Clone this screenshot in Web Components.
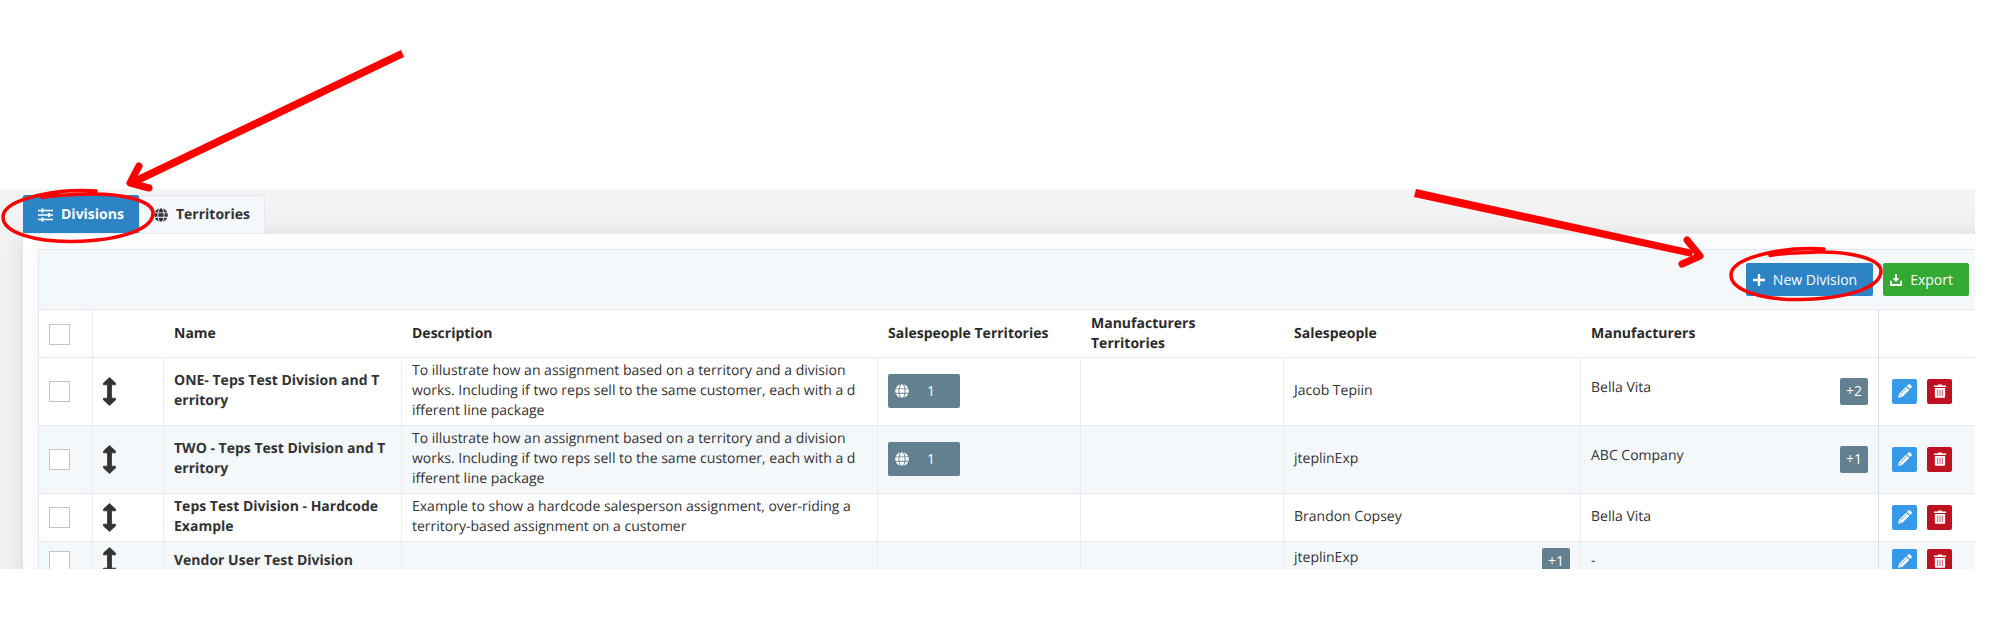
<!DOCTYPE html>
<html lang="en">
<head>
<meta charset="utf-8">
<title>Divisions</title>
<style>
    body {
        margin: 0;
        background: #fff;
        color: #333;
        font: 14px/20px "Open Sans", "Noto Sans", sans-serif;
        text-rendering: geometricPrecision;
    }
</style>
</head>
<body>
<division-page></division-page>

<script>
const icons = {
    sliders: ['0 0 15 14', '<path d="M0 2.500h15M0 7h15M0 11.500h15" stroke="currentColor" stroke-width="1.700"/><path d="M4.500 0.500v4M11 5v4M4.500 9.500v4" stroke="currentColor" stroke-width="2.200"/>'],
    globe: ['0 0 496 512', '<path fill="currentColor" d="M336.500 160C322 70.700 287.800 8 248 8s-74 62.700-88.500 152h177zM152 256c0 22.200 1.200 43.500 3.300 64h185.300c2.100-20.500 3.300-41.800 3.300-64s-1.200-43.500-3.300-64H155.300c-2.100 20.500-3.300 41.800-3.300 64zm324.700-96c-28.600-67.900-86.500-120.400-158-141.600 24.400 33.800 41.200 84.700 50 141.600h108zM177.200 18.400C105.800 39.600 47.800 92.100 19.300 160h108c8.700-56.900 25.500-107.800 49.900-141.600zM487.400 192H372.700c2.100 21 3.300 42.500 3.300 64s-1.200 43-3.300 64h114.600c5.500-20.500 8.600-41.800 8.600-64s-3.100-43.500-8.500-64zM120 256c0-21.500 1.200-43 3.300-64H8.600C3.200 212.500 0 233.800 0 256s3.200 43.500 8.600 64h114.600c-2-21-3.200-42.500-3.200-64zm39.500 96c14.500 89.300 48.700 152 88.500 152s74-62.700 88.500-152h-177zm159.300 141.600c71.400-21.200 129.400-73.700 158-141.600h-108c-8.800 56.900-25.600 107.800-50 141.600zM19.300 352c28.600 67.900 86.500 120.400 158 141.600-24.400-33.800-41.200-84.700-50-141.600h-108z"/>'],
    plus: ['0 0 12 12', '<path d="M6 0.500v11M0.500 6h11" stroke="currentColor" stroke-width="2.400" stroke-linecap="round"/>'],
    download: ['0 0 12 12', '<path d="M1 7.500V11h10V7.500" fill="none" stroke="currentColor" stroke-width="1.900" stroke-linejoin="round" stroke-linecap="round"/><path d="M5 0h2v4.200h2.600L6 8 2.400 4.200H5z" fill="currentColor"/>'],
    move: ['0 0 13 29', '<path d="M6.500 0.500 12.500 6v1.800H8.500v13.400h4V23l-6 5.500L0.500 23v-1.800h4V7.800h-4V6z" fill="currentColor" stroke="currentColor" stroke-width="0.800" stroke-linejoin="round"/>'],
    pencil: ['0 0 14 14', '<path d="M0.200 13.800 0.900 9.900 8 2.700 11.300 6 4.100 13.100zM8.900 1.900 10.200 0.600c.6-.6 1.400-.6 2 0l1.200 1.200c.6.6.6 1.400 0 2L12.100 5.100z" fill="currentColor"/><path d="M3 10 8.600 4.400M1.500 10.500l2 2" stroke="#379ae8" stroke-width=".7"/>'],
    trash: ['0 0 13 15', '<path d="M0 1.600h4L4.700 0.500h3.600L9 1.600h4v1.600H0zM1 4.200h11V13.500c0 .8-.5 1.300-1.300 1.300H2.300C1.500 14.800 1 14.300 1 13.500z" fill="currentColor"/><path d="M4 6v7M6.500 6v7M9 6v7" stroke="#d8455a" stroke-width="1"/>']
}

class UiIcon extends HTMLElement {
    connectedCallback () {
        const [box, shape] = icons[this.getAttribute('name')]
        this.attachShadow({ mode: 'open' }).innerHTML = `
<style>
    :host { display: inline-flex; width: 14px; height: 14px; flex: none; }
    svg { width: 100%; height: 100%; }
</style>
<svg viewBox="${box}" aria-hidden="true">${shape}</svg>`
    }
}
customElements.define('ui-icon', UiIcon)

// Creates an element whose shadow root is cloned from a template.
function define (name, html) {
    const template = document.createElement('template')
    template.innerHTML = html
    customElements.define(name, class extends HTMLElement {
        constructor () {
            super()
            this.attachShadow({ mode: 'open' })
            .appendChild(template.content.cloneNode(true))
        }
    })
}

define('tool-button', `
<style>
    :host { display: block; --bg: #2d84c5; }
    :host([kind=export]) { --bg: #33a833; }
    button {
        display: flex;
        align-items: center;
        gap: 8px;
        height: 33px;
        padding: 0 16px 0 7px;
        border: 0;
        border-radius: 2px;
        background: var(--bg);
        color: #fff;
        font: inherit;
    }
</style>
<button type="button"><slot name="icon"></slot><slot></slot></button>
`)

define('icon-button', `
<style>
    :host { display: block; --bg: #379ae8; }
    :host([kind=delete]) { --bg: #bf1120; }
    button {
        display: flex;
        align-items: center;
        justify-content: center;
        width: 25px;
        height: 25px;
        padding: 0;
        border: 0;
        border-radius: 2px;
        background: var(--bg);
        color: #fff;
    }
</style>
<button type="button"><slot></slot></button>
`)

define('territory-count', `
<style>
    :host { display: block; }
    button {
        display: flex;
        align-items: center;
        gap: 18px;
        width: 72px;
        height: 34px;
        padding: 0 7px;
        border: 0;
        border-radius: 2px;
        background: #62808f;
        color: #fff;
        font: inherit;
    }
</style>
<button type="button"><ui-icon name="globe"></ui-icon><slot></slot></button>
`)

// A first value with a badge that tells how many more there are.
define('value-list', `
<style>
    :host { display: flex; align-items: flex-start; justify-content: space-between; }
    button {
        height: 27px;
        width: 28px;
        padding: 0;
        border: 0;
        border-radius: 2px;
        background: #62808f;
        color: #fff;
        font: inherit;
    }
</style>
<span><slot></slot></span>
<button type="button"><slot name="more"></slot></button>
`)

define('tab-bar', `
<style>
    :host { display: block; }
    nav { display: flex; }
    a {
        display: flex;
        align-items: center;
        gap: 8px;
        box-sizing: border-box;
        height: 38px;
        padding: 1px 14px 0;
        border: 1px solid #e1e9f0;
        border-bottom: 0;
        border-radius: 2px 2px 0 0;
        background: #f4f8fc;
        color: #333;
        font-weight: 700;
        text-decoration: none;
    }
    a.active { background: #2d84c5; border-color: #2d84c5; color: #fff; }
    a.active ui-icon { width: 15px; }
</style>
<nav>
    <a class="active" href="#divisions"><ui-icon name="sliders"></ui-icon>Divisions</a>
    <a href="#territories"><ui-icon name="globe"></ui-icon>Territories</a>
</nav>
`)

// Long values break at fixed places, some of them inside a word.
const divisions = [
    {
        name: 'ONE- Teps Test Division and T<br>erritory',
        description: 'To illustrate how an assignment based on a territory and a division<br>works. Including if two reps sell to the same customer, each with a d<br>ifferent line package',
        territories: 1,
        salespeople: ['Jacob Tepiin'],
        manufacturers: ['Bella Vita', 2]
    },
    {
        name: 'TWO - Teps Test Division and T<br>erritory',
        description: 'To illustrate how an assignment based on a territory and a division<br>works. Including if two reps sell to the same customer, each with a d<br>ifferent line package',
        territories: 1,
        salespeople: ['jteplinExp'],
        manufacturers: ['ABC Company', 1]
    },
    {
        name: 'Teps Test Division - Hardcode<br>Example',
        description: 'Example to show a hardcode salesperson assignment, over-riding a<br>territory-based assignment on a customer',
        salespeople: ['Brandon Copsey'],
        manufacturers: ['Bella Vita']
    },
    {
        name: 'Vendor User Test Division',
        description: '',
        salespeople: ['jteplinExp', 1],
        manufacturers: ['-']
    }
]

const values = ([first, more]) => more
    ? `<value-list>${first}<span slot="more">+${more}</span></value-list>`
    : first

const row = (d, i) => `
<tr>
    <td><input type="checkbox" aria-label="Select row ${i + 1}"></td>
    <td><ui-icon class="move" name="move"></ui-icon></td>
    <td class="name">${d.name}</td>
    <td>${d.description}</td>
    <td>${d.territories ? `<territory-count>${d.territories}</territory-count>` : ''}</td>
    <td></td>
    <td>${values(d.salespeople)}</td>
    <td>${values(d.manufacturers)}</td>
    <td class="actions"><div>
        <icon-button><ui-icon name="pencil"></ui-icon></icon-button>
        <icon-button kind="delete"><ui-icon name="trash"></ui-icon></icon-button>
    </div></td>
</tr>`

define('division-table', `
<style>
    :host { display: block; }
    table { width: 100%; table-layout: fixed; border-collapse: separate; border-spacing: 0; background: #fff; }
    .c-check { width: 54px; }
    .c-move { width: 71px; }
    .c-name { width: 238px; }
    .c-terr { width: 203px; }
    .c-people { width: 297px; }
    .c-makers { width: 298px; }
    .c-actions { width: 96px; }
    th, td {
        box-sizing: border-box;
        padding: 3px 10px 4px;
        border-top: 1px solid #e6eaee;
        text-align: left;
        vertical-align: middle;
    }
    th { height: 48px; padding: 4px 10px 3px; color: #2b2b2b; }
    td { height: 40px; border-right: 1px solid #e9edf1; }
    th:first-child { border-right: 1px solid #e9edf1; }
    td:nth-last-child(2), th:nth-last-child(2) { border-right: 1px solid #d8dee6; }
    td:last-child { border-right: 0; }
    tbody tr:nth-child(even) { background: #f4f8fb; }
    .name { font-weight: 700; }
    .name, .name + td { white-space: nowrap; }
    .actions { padding-left: 13px; }
    .actions div { display: flex; gap: 10px; }
    .move { display: flex; width: 13px; height: 29px; }
    input {
        display: block;
        appearance: none;
        box-sizing: border-box;
        width: 21px;
        height: 21px;
        margin: 0;
        border: 1px solid #c4c4c4;
        background: #fff;
    }
</style>
<table>
    <colgroup>
        <col class="c-check"><col class="c-move"><col class="c-name"><col>
        <col class="c-terr"><col class="c-terr"><col class="c-people"><col class="c-makers"><col class="c-actions">
    </colgroup>
    <thead>
        <tr>
            <th><input type="checkbox" aria-label="Select all"></th>
            <th></th>
            <th>Name</th>
            <th>Description</th>
            <th>Salespeople Territories</th>
            <th>Manufacturers<br>Territories</th>
            <th>Salespeople</th>
            <th>Manufacturers</th>
            <th></th>
        </tr>
    </thead>
    <tbody>${divisions.map(row).join('')}</tbody>
</table>
`)

// Hand drawn marks that lie over the page.
define('page-marks', `
<style>
    :host { position: absolute; left: 0; top: 0; pointer-events: none; }
    :host([side=right]) { left: auto; right: 0; }
    svg { display: block; overflow: visible; }
    path { fill: none; stroke: #f00; }
    .ring { stroke-width: 3.5; stroke-linecap: round; }
    .shaft { fill: #f00; stroke: none; }
    .head { stroke-width: 7; stroke-linecap: round; stroke-linejoin: round; }
    svg.right, :host([side=right]) svg.left { display: none; }
    :host([side=right]) svg.right { display: block; }
</style>
<svg class="left" width="420" height="310" aria-hidden="true">
    <path class="ring" d="M96 191C78 190 56 191.500 40 195S3 205 3 217c0 16 33 25 69 24.500 48-1 81-12 81-28.500 0-13-33-19.500-63-19-20 .5-38 1.500-48 3.500"/>
    <path class="shaft" d="M401 50 404 57 134 186 131 179z"/>
    <path class="head" d="M139 166 130 183 149 188"/>
</svg>
<svg class="right" width="600" height="310" viewBox="1400 0 600 310" aria-hidden="true">
    <path class="ring" d="M1824 249C1806 248 1784 249.500 1768 253S1731 263 1731 275c0 16 33 25 69 24.500 48-1 81-12 81-28.500 0-13-33-19.500-63-19-20 .5-38 1.500-48 3.500"/>
    <path class="shaft" d="M1416 189 1414 197 1692 257 1693 250z"/>
    <path class="head" d="M1687 240 1700 256 1682 264"/>
</svg>
`)

define('division-page', `
<style>
    :host { display: block; position: relative; padding: 189px 25px 0 0; }
    .frame {
        box-sizing: border-box;
        max-height: 380px;
        padding: 6px 0 0 23px;
        overflow: hidden;
        background: #f3f3f3;
    }
    .panel {
        margin-right: -40px;
        padding: 15px 40px 0 15px;
        border-top: 1px solid #e6edf4;
        background: #fff;
        box-shadow: 0 4px 24px rgba(0, 0, 0, .12);
    }
    .card {
        border: solid #dfe7ef;
        border-width: 1px 0 0 1px;
        border-radius: 2px 0 0 0;
        background: #f4f8fb;
        box-shadow: 0 4px 20px rgba(60, 80, 140, .08);
    }
    .toolbar {
        display: flex;
        justify-content: flex-end;
        gap: 10px;
        padding: 13px 6px 13px 0;
    }
    .toolbar ui-icon { width: 12px; height: 12px; }
    tab-bar { position: relative; }
</style>
<div class="frame">
    <tab-bar></tab-bar>
    <div class="panel">
        <div class="card">
            <div class="toolbar">
                <tool-button><ui-icon slot="icon" name="plus"></ui-icon>New Division</tool-button>
                <tool-button kind="export"><ui-icon slot="icon" name="download"></ui-icon>Export</tool-button>
            </div>
            <division-table></division-table>
        </div>
    </div>
</div>
<page-marks></page-marks>
<page-marks side="right"></page-marks>
`)
</script>
</body>
</html>
